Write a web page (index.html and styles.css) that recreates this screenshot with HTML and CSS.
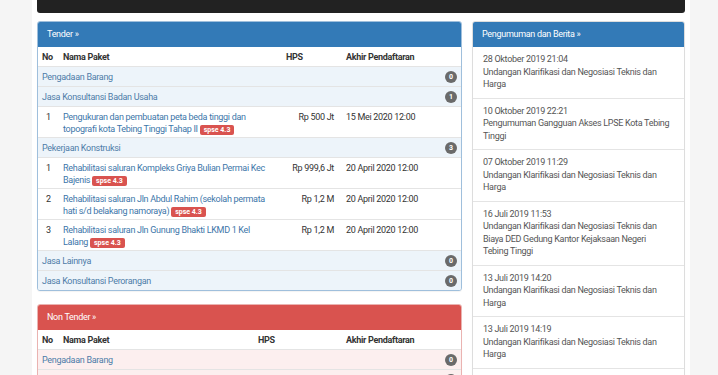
FILE: index.html
```html
<!DOCTYPE html>
<html lang="id">
<head>
    <meta charset="UTF-8">
    <meta name="viewport" content="width=device-width, initial-scale=1.0">
    <title>LPSE Kota Tebing Tinggi</title>
    <link rel="stylesheet" href="styles.css">
</head>
<body>
    <div class="page">
        <div class="navbar"></div>
        <div class="content">
            <div class="main">
                <div class="panel panel-tender">
                    <div class="panel-heading">Tender &raquo;</div>
                    <table class="paket">
                        <colgroup>
                            <col class="c-no"><col class="c-nama"><col class="c-hps"><col class="c-akhir">
                        </colgroup>
                        <tr class="head">
                            <th>No</th><th>Nama Paket</th><th>HPS</th><th>Akhir Pendaftaran</th>
                        </tr>
                        <tr class="kategori">
                            <td colspan="4">Pengadaan Barang <span class="count">0</span></td>
                        </tr>
                        <tr class="kategori">
                            <td colspan="4">Jasa Konsultansi Badan Usaha <span class="count">1</span></td>
                        </tr>
                        <tr class="item">
                            <td class="no">1</td>
                            <td><a href="#">Pengukuran dan pembuatan peta beda tinggi dan topografi kota Tebing Tinggi Tahap II</a> <span class="spse">spse 4.3</span></td>
                            <td class="hps">Rp 500 Jt</td>
                            <td>15 Mei 2020 12:00</td>
                        </tr>
                        <tr class="kategori">
                            <td colspan="4">Pekerjaan Konstruksi <span class="count">3</span></td>
                        </tr>
                        <tr class="item">
                            <td class="no">1</td>
                            <td><a href="#">Rehabilitasi saluran Kompleks Griya Bulian Permai Kec Bajenis</a> <span class="spse">spse 4.3</span></td>
                            <td class="hps">Rp 999,6 Jt</td>
                            <td>20 April 2020 12:00</td>
                        </tr>
                        <tr class="item">
                            <td class="no">2</td>
                            <td><a href="#">Rehabilitasi saluran Jln Abdul Rahim (sekolah permata hati s/d belakang namoraya)</a> <span class="spse">spse 4.3</span></td>
                            <td class="hps">Rp 1,2 M</td>
                            <td>20 April 2020 12:00</td>
                        </tr>
                        <tr class="item">
                            <td class="no">3</td>
                            <td><a href="#">Rehabilitasi saluran Jln Gunung Bhakti LKMD 1 Kel Lalang</a> <span class="spse">spse 4.3</span></td>
                            <td class="hps">Rp 1,2 M</td>
                            <td>20 April 2020 12:00</td>
                        </tr>
                        <tr class="kategori">
                            <td colspan="4">Jasa Lainnya <span class="count">0</span></td>
                        </tr>
                        <tr class="kategori">
                            <td colspan="4">Jasa Konsultansi Perorangan <span class="count">0</span></td>
                        </tr>
                    </table>
                </div>

                <div class="panel panel-nontender">
                    <div class="panel-heading">Non Tender &raquo;</div>
                    <table class="paket">
                        <colgroup>
                            <col class="c-no"><col class="c-nama2"><col class="c-hps2"><col class="c-akhir">
                        </colgroup>
                        <tr class="head">
                            <th>No</th><th>Nama Paket</th><th>HPS</th><th>Akhir Pendaftaran</th>
                        </tr>
                        <tr class="kategori">
                            <td colspan="4">Pengadaan Barang <span class="count">0</span></td>
                        </tr>
                        <tr class="kategori">
                            <td colspan="4">Jasa Konsultansi Badan Usaha <span class="count">0</span></td>
                        </tr>
                    </table>
                </div>
            </div>

            <div class="side">
                <div class="panel panel-berita">
                    <div class="panel-heading">Pengumuman dan Berita &raquo;</div>
                    <ul class="berita">
                        <li><span class="tgl">28 Oktober 2019 21:04</span>Undangan Klarifikasi dan Negosiasi Teknis dan Harga</li>
                        <li><span class="tgl">10 Oktober 2019 22:21</span>Pengumuman Gangguan Akses LPSE Kota Tebing Tinggi</li>
                        <li><span class="tgl">07 Oktober 2019 11:29</span>Undangan Klarifikasi dan Negosiasi Teknis dan Harga</li>
                        <li><span class="tgl">16 Juli 2019 11:53</span>Undangan Klarifikasi dan Negosiasi Teknis dan Biaya DED Gedung Kantor Kejaksaan Negeri<br>Tebing Tinggi</li>
                        <li><span class="tgl">13 Juli 2019 14:20</span>Undangan Klarifikasi dan Negosiasi Teknis dan Harga</li>
                        <li><span class="tgl">13 Juli 2019 14:19</span>Undangan Klarifikasi dan Negosiasi Teknis dan Harga</li>
                        <li><span class="tgl">12 Juli 2019 10:02</span>Undangan Klarifikasi dan Negosiasi Teknis dan Harga</li>
                    </ul>
                </div>
            </div>
        </div>
    </div>
</body>
</html>
```

FILE: styles.css
```css
body {
    margin: 0;
    background-color: #f5f5f5;
    font-family: Roboto, "Liberation Sans", sans-serif;
    font-size: 9px;
    letter-spacing: -0.3px;
    color: #333;
    height: 375px;
    overflow: hidden;
}
.page {
    width: 648px;
    margin-left: 32px;
    padding: 0 5px;
    background-color: #fff;
    height: 375px;
    overflow: hidden;
}
.navbar {
    height: 13px;
    background-color: #222;
    border-radius: 0 0 3px 3px;
}
.content {
    display: flex;
    gap: 10px;
    margin-top: 8px;
}
.main {
    width: 425px;
}
.side {
    width: 213px;
}
.panel {
    border: 1px solid #ddd;
    border-radius: 3px;
    background-color: #fff;
    box-shadow: 0 1px 1px rgba(0, 0, 0, 0.05);
    overflow: hidden;
}
.panel-heading {
    height: 26px;
    line-height: 26px;
    padding: 0 10px;
    color: #fff;
    background-color: #337ab7;
    margin: -1px -1px 0;
}
.panel-tender {
    border-color: #9fbfdc;
}
.panel-nontender {
    margin-top: 13px;
    border-color: #eab3b1;
}
.panel-nontender .panel-heading {
    background-color: #d9534f;
}
table.paket {
    width: 100%;
    border-collapse: collapse;
    table-layout: fixed;
}
.c-no { width: 21px; }
.c-nama { width: 222px; }
.c-hps { width: 57px; }
.c-nama2 { width: 194px; }
.c-hps2 { width: 85px; }
.paket th,
.paket td {
    padding: 4px 4px 3px;
    line-height: 12px;
    text-align: left;
    vertical-align: top;
    border-top: 1px solid #e4e4e4;
}
.paket th {
    font-weight: bold;
    color: #333;
    border-top: none;
}
.paket tr.head th:nth-child(3) {
    padding-left: 5px;
}
.paket tr.head th:nth-child(4),
.paket td:nth-child(4) {
    padding-left: 8px;
}
.kategori td {
    background-color: #edf4fa;
    color: #4d7ca8;
}
.panel-nontender .kategori td {
    background-color: #fcefef;
}
.item td {
    padding-bottom: 2px;
}
.item td.no {
    text-align: center;
}
.item td.hps {
    text-align: right;
}
.item td:nth-child(2) {
    padding-right: 12px;
}
.item a {
    color: #3d76a9;
    text-decoration: none;
}
.count {
    float: right;
    width: 12px;
    height: 12px;
    line-height: 12px;
    border-radius: 50%;
    background-color: #6a6a6a;
    color: #fff;
    font-size: 7px;
    font-weight: bold;
    letter-spacing: 0;
    text-align: center;
}
.spse {
    display: inline-block;
    background-color: #d9534f;
    color: #fff;
    font-size: 7px;
    font-weight: bold;
    letter-spacing: 0;
    line-height: 10px;
    padding: 0 4px;
    border-radius: 2px;
}
.berita {
    list-style: none;
    margin: 0;
    padding: 0;
}
.berita li {
    padding: 6px 10px 7px;
    border-top: 1px solid #e4e4e4;
    color: #555;
    line-height: 12.5px;
}
.berita li:first-child {
    border-top: none;
}
.tgl {
    display: block;
}
```
